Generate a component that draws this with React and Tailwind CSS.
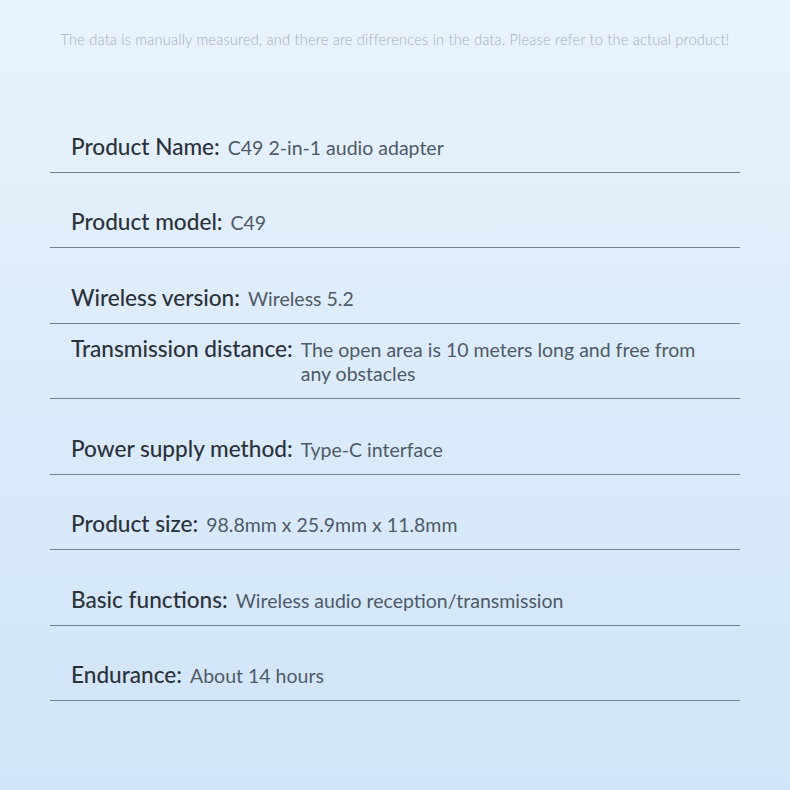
const specs = [
  { label: "Product Name:", value: "C49 2-in-1 audio adapter" },
  { label: "Product model:", value: "C49" },
  { label: "Wireless version:", value: "Wireless 5.2" },
  { label: "Transmission distance:", value: "The open area is 10 meters long and free from any obstacles" },
  { label: "Power supply method:", value: "Type-C interface" },
  { label: "Product size:", value: "98.8mm x 25.9mm x 11.8mm" },
  { label: "Basic functions:", value: "Wireless audio reception/transmission" },
  { label: "Endurance:", value: "About 14 hours" },
];

export default function App() {
  return (
    <div className="w-[790px] h-[790px] overflow-hidden bg-gradient-to-b from-[#e9f3fc] via-[#dbebfa] to-[#d0e5f9] font-['Lato',sans-serif]">
      <p className="pt-[29px] h-[97px] text-center text-[14.6px] font-light text-[#a5b0bb] tracking-[0.2px]">
        The data is manually measured, and there are differences in the data. Please refer to the actual product!
      </p>
      <div className="mx-[50px] flex flex-col">
        {specs.map((s) => (
          <div key={s.label} className="h-[75.5px] flex flex-col justify-end pl-[21px] pr-[28px] pb-[12px] border-b border-[#71808f]">
            <div className="flex items-baseline">
              <span className="shrink-0 text-[22.6px] leading-[26px] font-medium text-[#2b323a]">{s.label}</span>
              <span className="ml-[8px] text-[19.5px] leading-[24px] text-[#4e5a67]">{s.value}</span>
            </div>
          </div>
        ))}
      </div>
    </div>
  );
}
